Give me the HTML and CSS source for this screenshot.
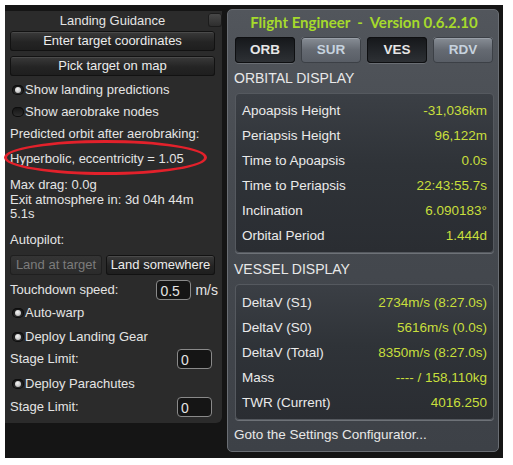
FILE: index.html
```html
<!DOCTYPE html>
<html lang="en">
<head>
    <meta charset="UTF-8">
    <title>Landing Guidance - Flight Engineer</title>
    <link rel="stylesheet" href="styles.css">
</head>
<body>

<div class="screen">
    <div class="landing">
        <div class="lg-title">
            <span>Landing Guidance</span>
            <span class="lg-close"></span>
        </div>
        <div class="btn wide">Enter target coordinates</div>
        <div class="btn wide gap">Pick target on map</div>

        <div class="toggle first"><span class="tick on"></span>Show landing predictions</div>
        <div class="toggle"><span class="tick"></span>Show aerobrake nodes</div>

        <div class="line">Predicted orbit after aerobraking:</div>
        <div class="line hyper">
            Hyperbolic, eccentricity = 1.05
            <span class="circled"></span>
        </div>
        <div class="info">
            Max drag: 0.0g<br>
            Exit atmosphere in: 3d 04h 44m<br>
            5.1s
        </div>

        <div class="line autopilot">Autopilot:</div>
        <div class="btn-row">
            <div class="btn off">Land at target</div>
            <div class="btn">Land somewhere</div>
        </div>

        <div class="field speed">
            <span>Touchdown speed:</span>
            <span class="input">0.5</span>
            <span class="unit">m/s</span>
        </div>
        <div class="toggle warp"><span class="tick on"></span>Auto-warp</div>
        <div class="toggle gear"><span class="tick on"></span>Deploy Landing Gear</div>
        <div class="field stage">
            <span>Stage Limit:</span>
            <span class="input">0</span>
        </div>
        <div class="toggle chutes"><span class="tick on"></span>Deploy Parachutes</div>
        <div class="field stage last">
            <span>Stage Limit:</span>
            <span class="input">0</span>
        </div>
    </div>

    <div class="engineer">
        <div class="fe-title">Flight Engineer&nbsp; - &nbsp;Version 0.6.2.10</div>
        <div class="tabs">
            <div class="tab active">ORB</div>
            <div class="tab">SUR</div>
            <div class="tab active">VES</div>
            <div class="tab">RDV</div>
        </div>

        <div class="section">ORBITAL DISPLAY</div>
        <div class="box orbital">
            <div class="row"><span>Apoapsis Height</span><span class="val">-31,036km</span></div>
            <div class="row"><span>Periapsis Height</span><span class="val">96,122m</span></div>
            <div class="row"><span>Time to Apoapsis</span><span class="val">0.0s</span></div>
            <div class="row"><span>Time to Periapsis</span><span class="val">22:43:55.7s</span></div>
            <div class="row"><span>Inclination</span><span class="val">6.090183°</span></div>
            <div class="row"><span>Orbital Period</span><span class="val">1.444d</span></div>
        </div>

        <div class="section vessel-head">VESSEL DISPLAY</div>
        <div class="box vessel">
            <div class="row"><span>DeltaV (S1)</span><span class="val">2734m/s (8:27.0s)</span></div>
            <div class="row"><span>DeltaV (S0)</span><span class="val">5616m/s (0.0s)</span></div>
            <div class="row"><span>DeltaV (Total)</span><span class="val">8350m/s (8:27.0s)</span></div>
            <div class="row"><span>Mass</span><span class="val">---- / 158,110kg</span></div>
            <div class="row"><span>TWR (Current)</span><span class="val">4016.250</span></div>
        </div>

        <div class="settings">Goto the Settings Configurator...</div>
    </div>
</div>

</body>
</html>
```

FILE: styles.css
```css
body {
    margin: 0;
    background-color: #fff;
    font-family: 'Liberation Sans', Arial, sans-serif;
    font-size: 13px;
    color: #e4e4e4;
}

.screen {
    margin: 5px 0 0 5px;
    width: 498px;
    height: 453px;
    background-color: #151515;
    display: flex;
    align-items: flex-start;
}

/* landing guidance window */

.landing {
    margin-top: 6px;
    width: 217px;
    height: 412px;
    background-color: #2b2b2b;
    border-radius: 0 0 6px 0;
    box-sizing: border-box;
    padding: 0 7px 0 5px;
}

.lg-title {
    height: 20px;
    line-height: 20px;
    text-align: center;
    position: relative;
}

.lg-close {
    position: absolute;
    right: -7px;
    top: 2px;
    width: 14px;
    height: 14px;
    border-radius: 3px;
    background: linear-gradient(#4a4a4a, #2c2c2c);
    box-shadow: inset 0 0 0 1px #1c1c1c;
}

.btn {
    height: 20px;
    line-height: 20px;
    text-align: center;
    border-radius: 3px;
    background: linear-gradient(#3c3c3c, #242424 55%, #1e1e1e);
    box-shadow: inset 0 0 0 1px #121212, inset 0 2px 0 #4a4a4a;
    color: #ececec;
}

.btn.gap {
    margin-top: 5px;
}

.btn.off {
    color: #7c7c7c;
    background: linear-gradient(#353535, #2a2a2a);
    box-shadow: inset 0 0 0 1px #1f1f1f;
}

.toggle {
    height: 22px;
    line-height: 22px;
    display: flex;
    align-items: center;
}

.toggle.first {
    margin-top: 3px;
}

.toggle.warp {
    margin-top: 1px;
}

.toggle.gear {
    margin-top: 2px;
}

.toggle.chutes {
    margin-top: 4px;
}

.tick {
    width: 12px;
    height: 10px;
    margin: 0 1px 0 2px;
    border-radius: 5px;
    background: linear-gradient(#141414, #303030);
    box-shadow: inset 0 0 0 1px #0d0d0d;
    position: relative;
}

.tick.on::after {
    content: "";
    position: absolute;
    left: 3px;
    top: 2px;
    width: 6px;
    height: 6px;
    border-radius: 50%;
    background: radial-gradient(circle at 40% 35%, #f4f4f4, #a8a8a8);
}

.line {
    height: 22px;
    line-height: 22px;
}

.hyper {
    margin-top: 3px;
    position: relative;
}

.circled {
    position: absolute;
    left: -6px;
    top: -8px;
    width: 203px;
    height: 35px;
    border: 3px solid #e3212b;
    border-radius: 50%;
    box-sizing: border-box;
}

.info {
    margin-top: 8px;
    line-height: 14.5px;
}

.autopilot {
    margin-top: 9px;
    height: 18px;
    line-height: 18px;
}

.btn-row {
    margin-top: 6px;
    display: flex;
    gap: 4px;
}

.btn-row .btn:first-child {
    width: 92px;
}

.btn-row .btn:last-child {
    flex: 1;
}

.field {
    display: flex;
    align-items: center;
    height: 22px;
}

.field span:first-child {
    flex: 1;
}

.speed {
    margin-top: 4px;
}

.input {
    width: 35px;
    height: 20px;
    line-height: 20px;
    box-sizing: border-box;
    padding-left: 3px;
    background-color: #151515;
    border: 1px solid #8a8a8a;
    border-radius: 4px;
    font-size: 14px;
}

.speed .input {
    margin-right: 1px;
}

.unit {
    margin-left: 3px;
    margin-right: -3px;
    font-size: 14px;
}

.stage {
    height: 20px;
    margin-top: 1px;
}

.stage .input {
    margin-right: 3px;
}

.stage.last {
    margin-top: 2px;
}

/* flight engineer window */

.engineer {
    margin: 4px 0 0 5px;
    width: 272px;
    height: 443px;
    box-sizing: border-box;
    padding: 0 5px 0 7px;
    background: linear-gradient(#52565c, #464a50 40%, #3d4147);
    border: 1px solid #6a6e74;
    border-radius: 5px;
}

.fe-title {
    height: 24px;
    line-height: 24px;
    text-align: center;
    font-family: Lato, 'Open Sans', sans-serif;
    font-weight: bold;
    font-size: 15px;
    color: #a6da2c;
}

.tabs {
    margin-top: 3px;
    display: flex;
    gap: 6px;
}

.tab {
    width: 60px;
    height: 26px;
    line-height: 26px;
    text-align: center;
    font-weight: bold;
    font-size: 13.5px;
    border-radius: 4px;
    color: #c6d2de;
    background: linear-gradient(#8a9098, #656a72 50%, #585d65);
    box-shadow: inset 0 0 0 1px #3c4046, inset 0 2px 0 #9aa0a8;
}

.tab.active {
    color: #e6e6e6;
    background: linear-gradient(#15171a, #24272b 60%, #2e3135);
    box-shadow: inset 0 0 0 1px #0e0f11, 0 1px 0 #6a6e74;
}

.section {
    height: 20px;
    line-height: 20px;
    margin-top: 5px;
    margin-left: -1px;
    font-size: 14px;
    color: #e8e8e8;
}

.section.vessel-head {
    margin-top: 6px;
}

.box {
    box-sizing: border-box;
    width: 259px;
    border-radius: 4px;
    background: linear-gradient(#3b3f45, #2f3338 45%, #2a2d32);
    border: 1px solid #55595f;
    box-shadow: 0 1px 0 #6e7278;
    padding: 4px 6px 4px 6px;
}

.orbital {
    margin-top: 5px;
}

.vessel {
    margin-top: 5px;
    padding-top: 5px;
}

.row {
    height: 25px;
    display: flex;
    justify-content: space-between;
    align-items: center;
    font-size: 13.5px;
    color: #eaeaea;
}

.val {
    color: #c8df3c;
}

.settings {
    margin-top: 5px;
    margin-left: -1px;
    height: 20px;
    line-height: 20px;
    font-size: 13.5px;
    color: #e8e8e8;
}
```
